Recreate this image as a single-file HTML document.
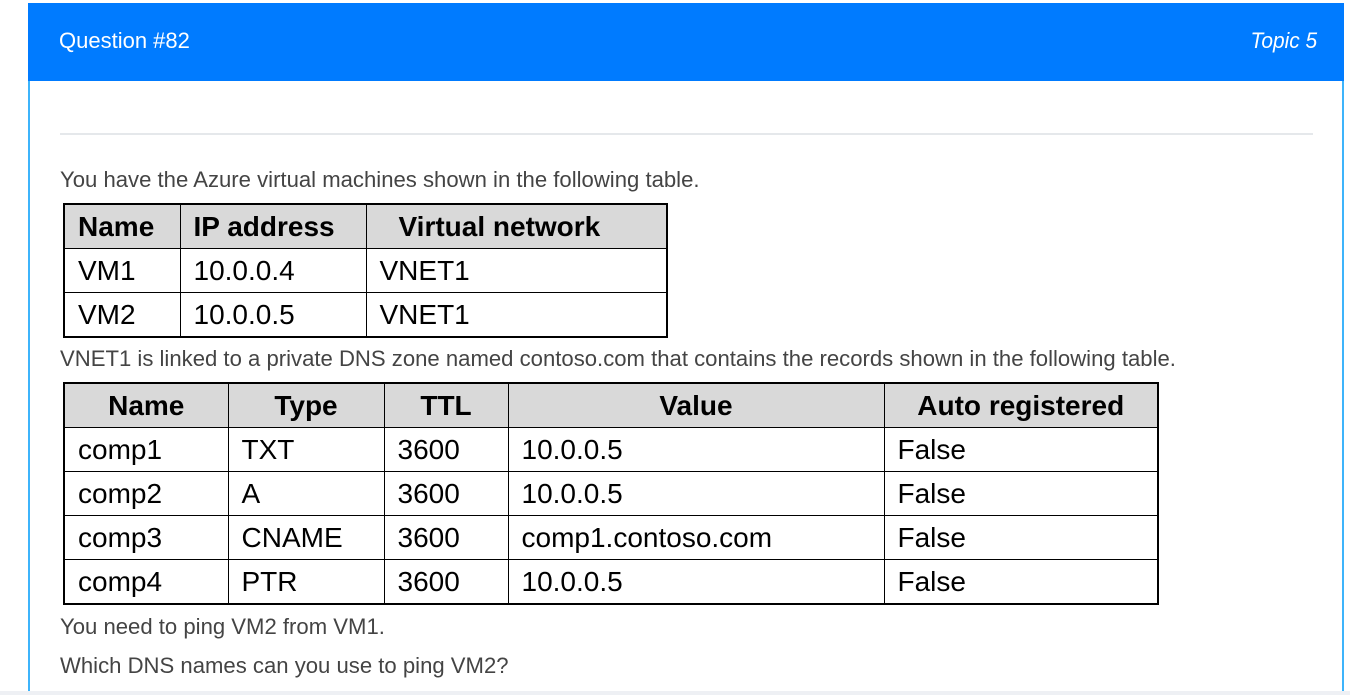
<!DOCTYPE html>
<html><head><style>
body{margin:0;width:1350px;height:695px;overflow:hidden;background:#fff;font-family:"Liberation Sans",sans-serif;position:relative}
.card{position:absolute;left:28px;top:3px;width:1312px;height:690px;border:2px solid #3db4fb;border-top:none;border-bottom:none}
.hdr{position:absolute;left:28px;top:3px;width:1316px;height:78px;background:#007bff;color:#fff}
.hdr .q{position:absolute;left:31px;top:25px;font-size:22px;transform-origin:left}
.hdr .t{position:absolute;right:27px;top:25px;font-size:22px;font-style:italic;transform:scaleX(.95);transform-origin:right}
.hr{position:absolute;left:60px;top:133px;width:1253px;height:2px;background:#e5e8eb}
.p{position:absolute;left:60px;font-size:22px;color:#444;transform:scaleX(1.005);transform-origin:left;white-space:nowrap}
table{position:absolute;border-collapse:collapse;border:2px solid #000;font-size:28px;color:#000}
td,th{border:1px solid #000;padding:0 0 0 13px;text-align:left;height:43px;box-sizing:border-box;line-height:43px}
th{background:#d9d9d9;font-weight:bold}
.c th{text-align:center;padding:0}
.bottom{position:absolute;left:0;top:691px;width:1350px;height:4px;background:#eef0f4}
</style></head><body>
<div class="card"></div>
<div class="hdr"><span class="q">Question #82</span><span class="t">Topic 5</span></div>
<div class="hr"></div>
<div class="p" style="top:167px">You have the Azure virtual machines shown in the following table.</div>
<table style="left:63px;top:203px;width:605px">
<tr><th style="width:116px">Name</th><th style="width:186px">IP address</th><th style="padding-left:32px">Virtual network</th></tr>
<tr><td>VM1</td><td>10.0.0.4</td><td>VNET1</td></tr>
<tr><td>VM2</td><td>10.0.0.5</td><td>VNET1</td></tr>
</table>
<div class="p" style="top:346px">VNET1 is linked to a private DNS zone named contoso.com that contains the records shown in the following table.</div>
<table class="c" style="left:63px;top:382px;width:1096px">
<tr><th style="width:164px">Name</th><th style="width:156px">Type</th><th style="width:124px">TTL</th><th style="width:376px">Value</th><th>Auto registered</th></tr>
<tr><td>comp1</td><td>TXT</td><td>3600</td><td>10.0.0.5</td><td>False</td></tr>
<tr><td>comp2</td><td>A</td><td>3600</td><td>10.0.0.5</td><td>False</td></tr>
<tr><td>comp3</td><td>CNAME</td><td>3600</td><td>comp1.contoso.com</td><td>False</td></tr>
<tr><td>comp4</td><td>PTR</td><td>3600</td><td>10.0.0.5</td><td>False</td></tr>
</table>
<div class="p" style="top:614px">You need to ping VM2 from VM1.</div>
<div class="p" style="top:653px">Which DNS names can you use to ping VM2?</div>
<div class="bottom"></div>
</body></html>
